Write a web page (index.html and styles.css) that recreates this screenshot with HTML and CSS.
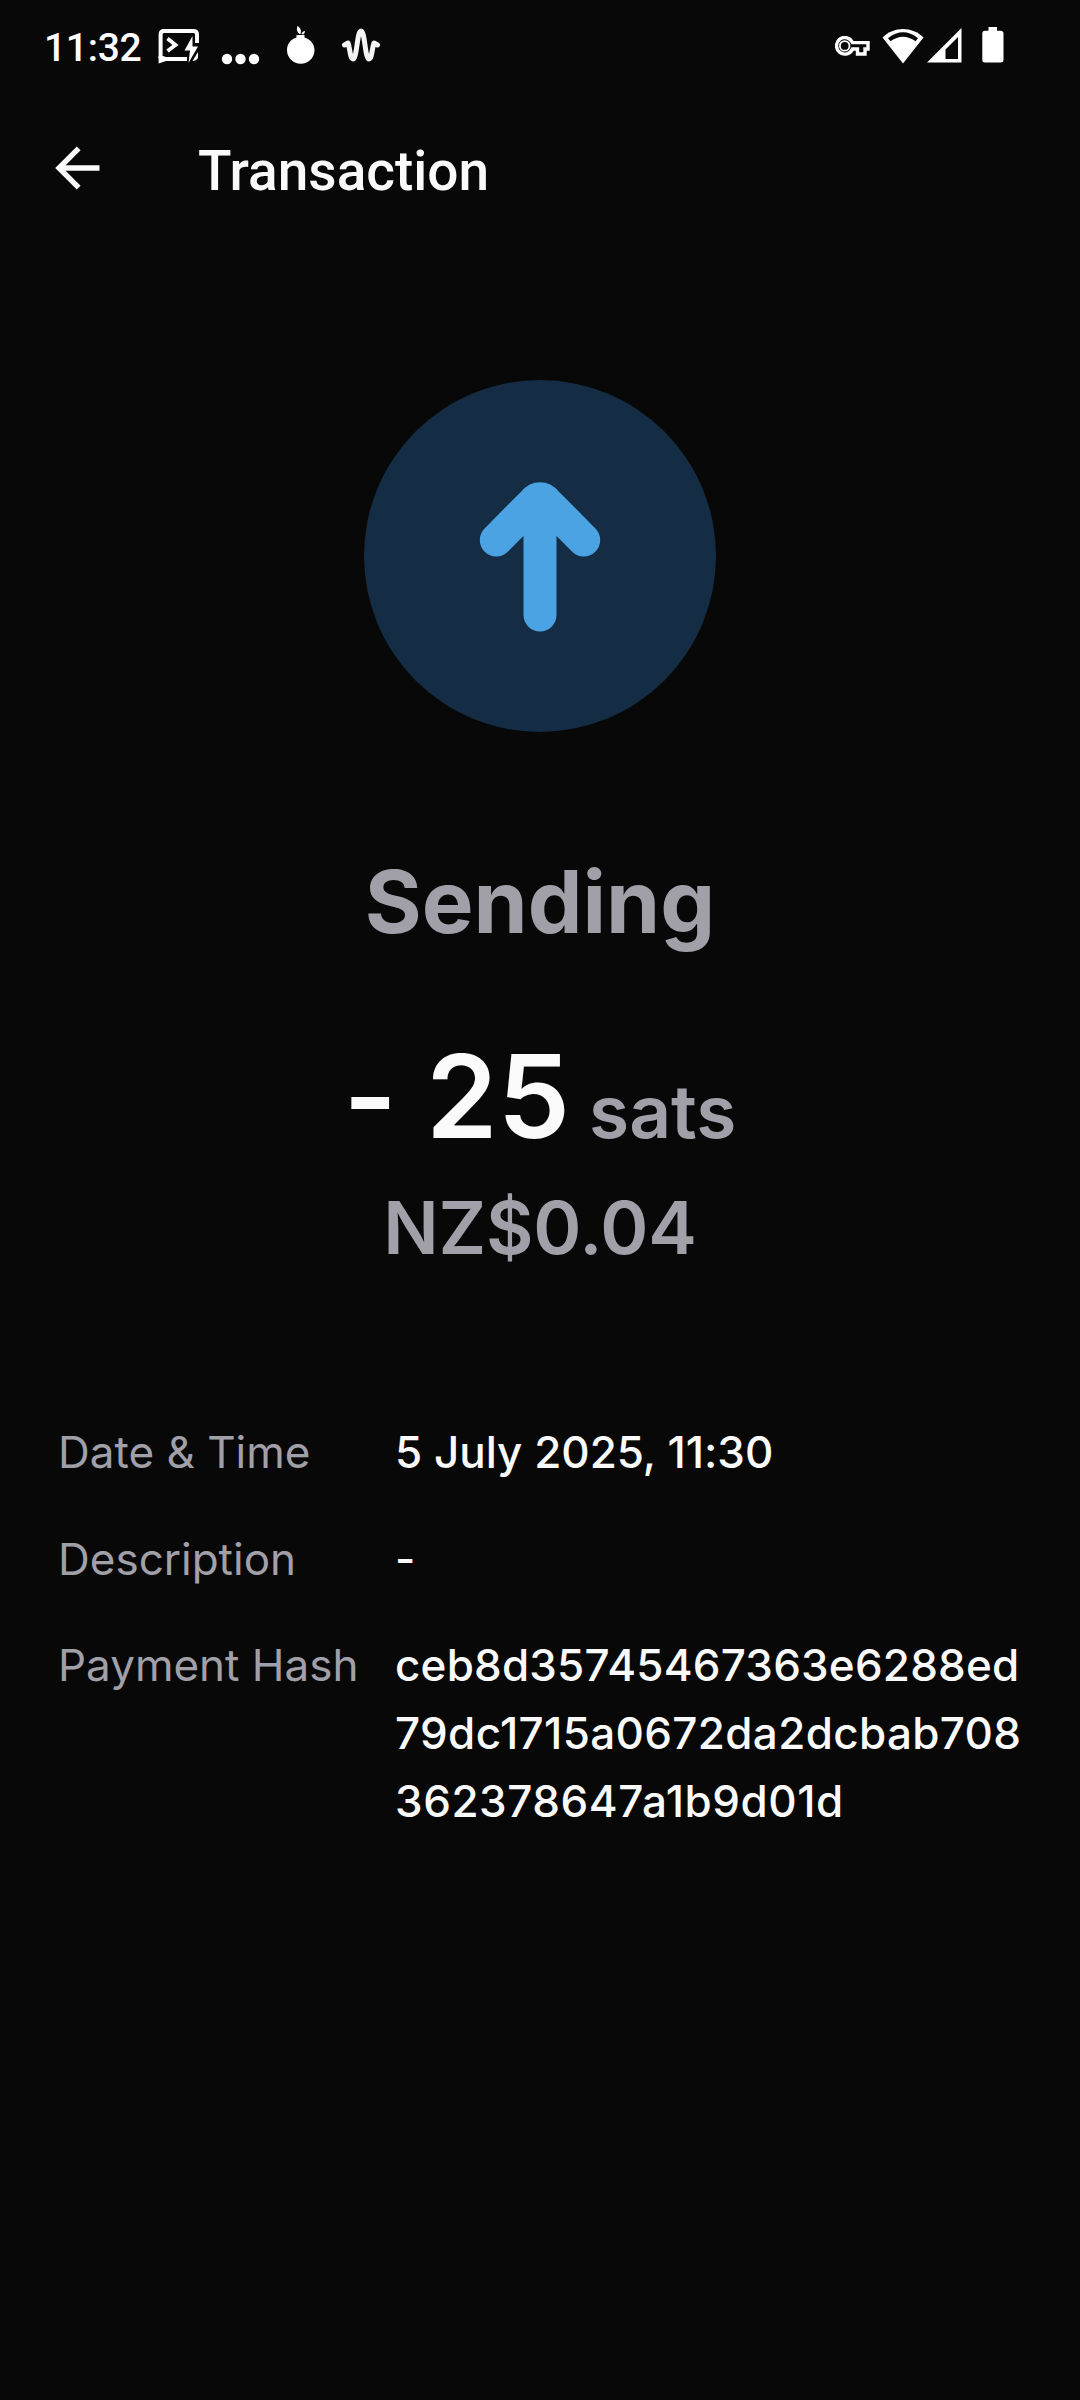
FILE: index.html
```html
<!DOCTYPE html>
<html lang="en">
<head>
<meta charset="utf-8">
<title>Transaction</title>
<link rel="stylesheet" href="styles.css">
</head>
<body>
<div class="screen">
  <div class="status-bar">
    <div class="status-left">
      <span class="clock">11:32</span>
      <svg class="status-terminal" width="42" height="36" viewBox="0 0 42 36" fill="none" stroke="#fff">
        <path d="M2.600 31V6.500Q2.600 3 6 3H35.500Q39 3 39 6.500V15" stroke-width="4"/>
        <path d="M0.600 35.500V28H5L8 29H29V33H8Z" fill="#fff" stroke="none"/>
        <path d="M9.500 10.500L17.500 17L9.500 23" stroke-width="3.800"/>
        <path d="M34.500 8L26.500 22.500H32L30.500 35L40 18.500H34.500Z" fill="#fff" stroke="none"/>
        <path d="M40 24V30Q38 33 34.500 33Z" fill="#fff" stroke="none"/>
      </svg>
      <svg class="status-dots" width="40" height="12" viewBox="0 0 40 12" fill="#fff"><circle cx="6" cy="6" r="5.200"/><circle cx="19.500" cy="6" r="5.200"/><circle cx="33" cy="6" r="5.200"/></svg>
      <svg class="status-onion" width="30" height="40" viewBox="0 0 30 40" fill="#fff">
        <path d="M10.500 9H18.500V11.500C24 13 28.500 18 28.500 24A13.700 13.700 0 0 1 1 24C1 18 5 13 10.500 11.500Z"/>
        <path d="M13.500 8C10.500 5 10.500 3 11.500 0C15 2 15.500 5 14.500 8ZM15.500 8C16 6 17.500 5 19 5Q19 8 17 8.500Z"/>
      </svg>
      <svg class="status-wave" width="40" height="36" viewBox="0 0 40 36" fill="none" stroke="#f4f4f4" stroke-width="5" stroke-linecap="round" stroke-linejoin="round"><path d="M3.500 17L7 15C9 20 9 31 12 31C16 31 16 3 20 3C24 3 24 31 28 31C31 31 31 20 33 15L36.500 17"/></svg>
    </div>
    <div class="status-right">
      <svg width="36" height="22" viewBox="0 0 36 22" fill="none" stroke="#fff" stroke-width="3.400"><path d="M17.500 6.600H33V13H30V18H22.500V13H17.500A8.300 8.300 0 1 1 17.500 6.600Z"/><circle cx="9.700" cy="9.900" r="4.800" stroke-width="1.800"/></svg>
      <svg class="status-wifi" width="42" height="36" viewBox="0 0 42 36"><path d="M0.500 9.500C12-2 30-2 41.500 9.500L21 35.500Z" fill="#fff"/><path d="M6 10.200Q21 -1.500 36 10.200L33.500 13.300Q21 4 8.500 13.300Z" fill="#080808"/></svg>
      <svg class="status-signal" width="35" height="35" viewBox="0 0 35 35"><path d="M34.500 0V34.500H0ZM31 9L18.500 21.500V31H31Z" fill="#fff" fill-rule="evenodd"/></svg>
      <svg class="status-battery" width="22" height="36" viewBox="0 0 22 36" fill="#fff"><path d="M6.500 0H15V3.800H18.500Q21.500 3.800 21.500 6.500V33Q21.500 35.500 18.500 35.500H3Q0.300 35.500 0.300 33V6.500Q0.300 3.800 3 3.800H6.500Z"/></svg>
    </div>
  </div>

  <header class="app-bar">
    <svg class="back" width="46" height="46" viewBox="0 0 46 46" fill="none" stroke="#fafafa" stroke-width="5.400"><path d="M44.500 23H5M23.700 3.300L4 23L23.700 42.700"/></svg>
    <h1 class="title">Transaction</h1>
  </header>

  <main class="content">
    <svg class="direction" width="352" height="352" viewBox="0 0 352 352">
      <circle cx="176" cy="176" r="176" fill="#152d44"/>
      <path d="M176 235V119M132.300 160L169.500 122.500Q176 115 182.500 122.500L219.700 160" fill="none" stroke="#4ba3e3" stroke-width="33" stroke-linecap="round" stroke-linejoin="round"/>
    </svg>
    <div class="state">Sending</div>
    <div class="amount"><span class="value">- 25</span><span class="unit">sats</span></div>
    <div class="fiat">NZ$0.04</div>
    <dl class="details">
      <dt>Date &amp; Time</dt><dd>5 July 2025, 11:30</dd>
      <dt>Description</dt><dd>-</dd>
      <dt>Payment Hash</dt><dd class="hash"><span class="hash-start">ceb8d35745467363e6288ed</span><br>79dc1715a0672da2dcbab708<br><span class="hash-end">362378647a1b9d01d</span></dd>
    </dl>
  </main>
</div>
</body>
</html>
```
FILE: styles.css
```css
* { box-sizing: border-box; }
body { margin: 0; background: #080808; color: #fafafa; font-family: Inter, "Liberation Sans", sans-serif; font-feature-settings: "calt" 0; }
svg { display: block; flex: none; }
.screen { width: 1080px; height: 2400px; overflow: hidden; }
.status-bar { height: 92px; padding: 0 76px 0 44px; display: flex; justify-content: space-between; }
.status-left, .status-right { display: flex; align-items: flex-start; }
.clock { font: 500 39px/46px Roboto, sans-serif; letter-spacing: -0.300px; color: #fff; margin-top: 25px; width: 114px; white-space: nowrap; }
.status-terminal { margin-top: 28px; }
.status-dots { margin: 53px 0 0 21px; }
.status-onion { margin: 26px 0 0 25px; }
.status-wave { margin: 28px 0 0 25px; }
.status-right > svg:first-child { margin-top: 36px; }
.status-wifi { margin: 28px 0 0 11px; }
.status-signal { margin: 28px 0 0 3px; }
.status-battery { margin: 27px 0 0 20px; }
.app-bar { height: 154px; padding: 47px 55px 43px; display: flex; align-items: center; gap: 97px; }
.back { margin-bottom: 6px; }
.title { margin: 0; font: 500 55px/64px Roboto, sans-serif; white-space: nowrap; }
.content { padding: 134px 58px 0; display: flex; flex-direction: column; align-items: center; }
.state { margin-top: 116px; font-size: 87px; line-height: 108px; font-weight: 700; color: #a1a0a9; }
.amount { margin-top: 75px; display: flex; align-items: baseline; gap: 19px; line-height: 132px; }
.value { font-size: 115px; font-weight: 600; }
.unit { font-size: 73px; font-weight: 600; color: #a1a0a9; }
.fiat { font-size: 73px; line-height: 100px; font-weight: 600; color: #a1a0a9; letter-spacing: -0.200px; }
.details { align-self: stretch; margin: 140px 0 0; display: grid; grid-template-columns: 301px 1fr; column-gap: 36px; row-gap: 38.500px; font-size: 44px; line-height: 68px; white-space: nowrap; }
.details dt { color: #a1a0a9; font-weight: 400; }
.details dd { margin: 0; font-weight: 500; }
.details .hash { letter-spacing: 0.350px; }
.hash-start { letter-spacing: 0.200px; }
.hash-end { letter-spacing: 0.550px; }
```
